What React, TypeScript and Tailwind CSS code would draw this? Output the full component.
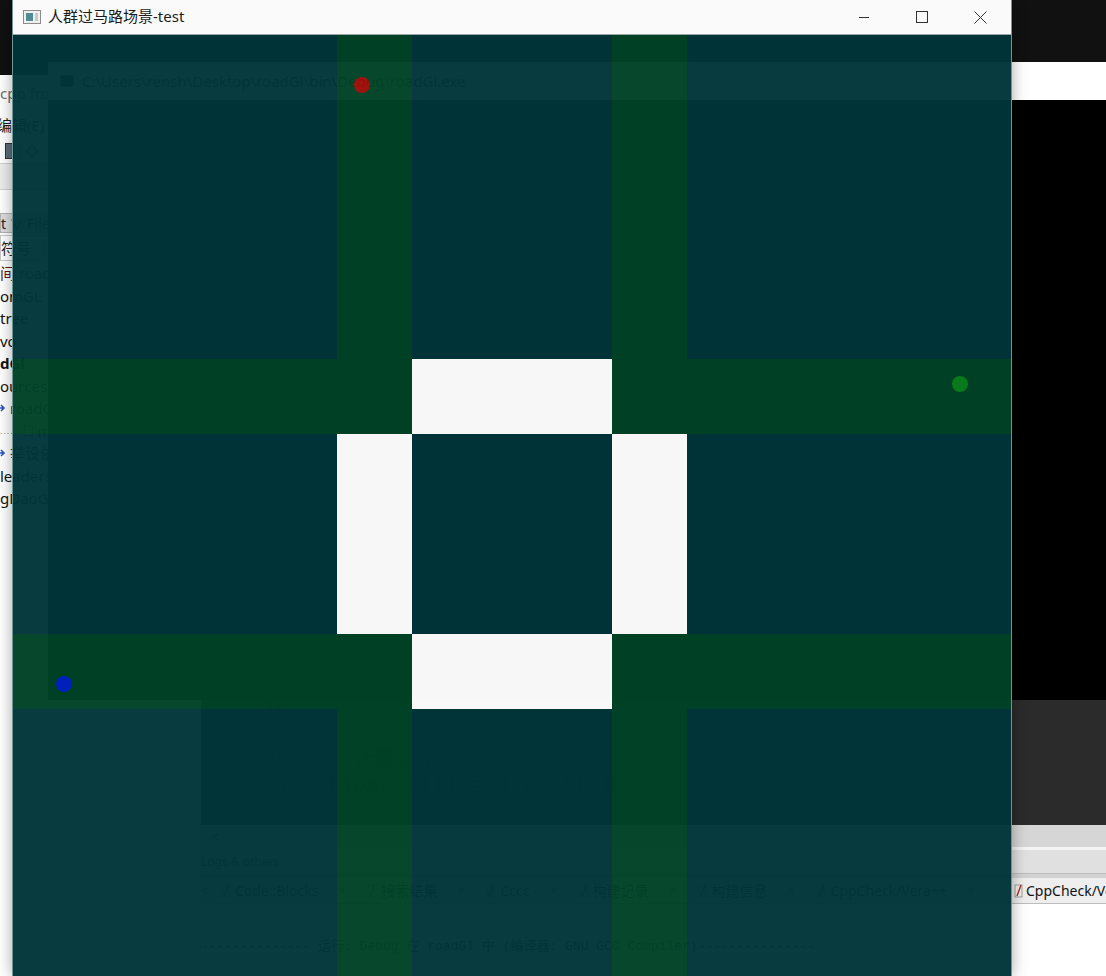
import React from 'react';

const ui = "font-['Noto_Sans','Noto_Sans_CJK_SC',sans-serif]";
const mono = "font-['Liberation_Mono','Noto_Sans_CJK_SC',monospace]";

type Cell = 't' | 'g' | 'w';

const layout: Cell[][] = [
  ['t', 'g', 't', 'g', 't'],
  ['g', 'g', 'w', 'g', 'g'],
  ['t', 'w', 't', 'w', 't'],
  ['g', 'g', 'w', 'g', 'g'],
  ['t', 'g', 't', 'g', 't'],
];

const cellColor: Record<Cell, string> = {
  t: 'bg-[#00353a]',
  g: 'bg-[#004327]',
  w: 'bg-[#ffffff]',
};

const treeRows: { text: string; bold?: boolean; arrow?: boolean; dots?: boolean; color?: string }[] = [
  { text: '间 roadGl', color: 'text-[#5a1a10]' },
  { text: 'omGL' },
  { text: 'tree' },
  { text: 'vo' },
  { text: 'dGl', bold: true },
  { text: 'ources' },
  { text: 'roadGl', arrow: true },
  { text: 'main.cpp', dots: true },
  { text: '举设依赖', arrow: true },
  { text: 'leaders' },
  { text: 'gDaoGL' },
];

const logTabs = ['Code::Blocks', '搜索结果', 'Cccc', '构建记录', '构建信息', 'CppCheck/Vera++'];

function TabIcon() {
  return (
    <svg width="10" height="16" viewBox="0 0 10 16" className="shrink-0">
      <rect x="1" y="2" width="7" height="12" fill="#f4f1e6" stroke="#8a8a8a" strokeWidth="0.8" />
      <path d="M7 2 L3 13" stroke="#b0302a" strokeWidth="1.4" />
    </svg>
  );
}

function CodeBlocks() {
  return (
    <div className={`absolute left-0 top-[75px] w-[1106px] h-[901px] flex flex-col bg-white text-[15px] ${ui}`}>
      <div className="h-[36px] flex items-center text-[#6b6b6b] whitespace-nowrap">cpp from roadGl - Code::Blocks 20.03</div>
      <div className="h-[28px] flex items-center gap-4 text-[#1a1a1a] whitespace-nowrap -ml-[3px]">
        <span>编辑(E)</span>
        <span>视图(V)</span>
        <span>搜索(S)</span>
        <span>工程(P)</span>
        <span>构建(B)</span>
        <span>调试(D)</span>
      </div>
      <div className="h-[24px] flex items-center gap-[6px] pl-[5px]">
        <div className="w-[9px] h-[16px] bg-[#5c6f7a] border border-[#333]" />
        <div className="w-px h-[18px] bg-[#bbb]" />
        <div className="w-[10px] h-[10px] rotate-45 border-2 border-[#7a8aa0]" />
      </div>
      <div className="h-[27px] bg-[#ececec] border-y border-[#d0d0d0]" />
      <div className="flex-1 flex min-h-0">
        <div className="w-[200px] flex flex-col bg-white">
          <div className="h-[22px]" />
          <div className="h-[22px] flex items-center">
            <div className="h-[20px] w-[60px] bg-[#dcdcdc] border border-[#b5b5b5] flex items-center text-[14px] text-[#222] whitespace-nowrap">
              t ∨ Files
            </div>
          </div>
          <div className="h-[28px] flex items-center">
            <div className="h-[26px] border border-[#c8c8c8] flex items-center text-[#222] whitespace-nowrap pr-3">符号</div>
          </div>
          <div className="flex flex-col leading-[22.5px] text-[#111] whitespace-nowrap">
            {treeRows.map((r, i) => (
              <div key={i} className={`h-[22.5px] flex items-center gap-[4px] ${r.bold ? 'font-bold' : ''} ${r.color ?? ''}`}>
                {r.arrow && (
                  <svg width="8" height="10" viewBox="0 0 8 10" className="shrink-0 -ml-[2px]">
                    <path d="M0 5 H5 M3 2 L6 5 L3 8" stroke="#2a55c8" strokeWidth="1.6" fill="none" />
                  </svg>
                )}
                {r.dots && <span className="text-[#888] tracking-[1px] text-[9px]">......</span>}
                {r.dots && <span className="w-[9px] h-[11px] border border-[#888] shrink-0" />}
                <span>{r.text}</span>
              </div>
            ))}
          </div>
        </div>
        <div className="flex-1 flex flex-col min-w-0 border-l border-[#d8d8d8]">
          <div className="flex-1 bg-[#2b2b2b] flex flex-col justify-end border-t border-[#3a4a4a] overflow-hidden">
            {[
              ['18', '//'],
              ['19', ''],
              ['20', '//计算比例'],
              ['21', 'float bili = 1.0/100.0;'],
              ['22', ''],
            ].map(([n, c]) => (
              <div key={n} className={`h-[26px] flex items-center text-[22px] text-[#0a0a0a] ${mono}`}>
                <span className="w-[88px] text-right">{n}</span>
                <span className={`ml-[37px] ${n === '21' ? 'font-bold' : ''}`}>{c}</span>
              </div>
            ))}
          </div>
          <div className="h-[22px] bg-[#d6d6d6] flex items-center pl-[10px] text-[#555] text-[14px]">&lt;</div>
          <div className="h-[129px] flex flex-col">
            <div className="h-[26px] bg-[#e0e0e0] border-t-[3px] border-[#f4f4f4] flex items-center text-[12px] text-[#333]">Logs &amp; others</div>
            <div className="h-[5px] bg-[#d2d2d2] border-t border-[#bcbcbc]" />
            <div className="h-[26px] bg-[#eeeeee] border-b border-[#bdbdbd] flex items-center text-[14px] text-[#111] whitespace-nowrap">
              <div className="w-[812px] shrink-0 flex items-center gap-3 overflow-hidden">
                <span className="text-[#666]">&lt;</span>
                {logTabs.map((t) => (
                  <div key={t} className="flex items-center gap-1 pr-2 border-r border-[#c8c8c8]">
                    <TabIcon />
                    <span>{t}</span>
                    <span className="ml-4 text-[#777]">×</span>
                  </div>
                ))}
              </div>
              <div className="flex items-center gap-[2px] h-full pl-[1px]">
                <TabIcon />
                <span>CppCheck/Vera++</span>
              </div>
            </div>
            <div className={`flex-1 bg-white pt-[33px] text-[13px] text-[#222] whitespace-nowrap ${mono}`}>
              -------------- 运行: Debug 在 roadGl 中 (编译器: GNU GCC Compiler)---------------
            </div>
          </div>
        </div>
      </div>
    </div>
  );
}

function Console() {
  return (
    <div className={`absolute left-[48px] top-[62px] w-[1080px] h-[638px] flex flex-col ${ui}`}>
      <div className="h-[38px] bg-white flex items-center gap-2 pl-[12px] text-[15px] text-[#333] whitespace-nowrap">
        <div className="w-[14px] h-[12px] bg-[#222] border border-[#888]" />
        <span>C:\Users\rensh\Desktop\roadGl\bin\Debug\roadGl.exe</span>
      </div>
      <div className="flex-1 bg-black" />
    </div>
  );
}

function GlWindow() {
  return (
    <div className="absolute left-[12px] top-0 w-[1000px] h-[976px] flex flex-col border-x border-[#6a9794] shadow-[0_0_14px_rgba(0,0,0,0.35)]">
      <div className={`h-[35px] shrink-0 bg-[#fafafa] border-b border-[#9aa6a6] flex items-center ${ui}`}>
        <svg width="18" height="16" viewBox="0 0 18 16" className="ml-[10px]">
          <rect x="0.5" y="1.5" width="17" height="13" fill="#f0f0f0" stroke="#8c8c8c" />
          <rect x="3" y="4" width="7" height="8" fill="#4d8c92" />
          <rect x="12" y="4" width="3" height="8" fill="#c8c8c8" />
        </svg>
        <span className="ml-[7px] -mt-[2px] text-[15px] text-[#1c1c1c] whitespace-nowrap">人群过马路场景-test</span>
        <div className="ml-auto flex h-full">
          <div className="w-[58px] flex items-center justify-center">
            <svg width="12" height="12" viewBox="0 0 12 12"><path d="M1 6.5 H11" stroke="#333" strokeWidth="1" /></svg>
          </div>
          <div className="w-[58px] flex items-center justify-center">
            <svg width="12" height="12" viewBox="0 0 12 12"><rect x="0.5" y="0.5" width="11" height="11" fill="none" stroke="#333" strokeWidth="1" /></svg>
          </div>
          <div className="w-[58px] mr-[2px] flex items-center justify-center">
            <svg width="13" height="13" viewBox="0 0 13 13"><path d="M0.5 0.5 L12.5 12.5 M12.5 0.5 L0.5 12.5" stroke="#333" strokeWidth="1" /></svg>
          </div>
        </div>
      </div>
      <div className="relative flex-1 overflow-hidden opacity-[0.97]">
        <div className="grid grid-cols-[324px_75px_200px_75px_326px] grid-rows-[324px_75px_200px_75px_326px] w-[1000px] h-[1000px]">
          {layout.flatMap((row, r) =>
            row.map((c, ci) => <div key={`${r}-${ci}`} className={cellColor[c]} />)
          )}
        </div>
        <div className="absolute left-[341px] top-[42px] w-[16px] h-[16px] rounded-full bg-[#9c0d06]" />
        <div className="absolute left-[939px] top-[341px] w-[16px] h-[16px] rounded-full bg-[#0b7d1c]" />
        <div className="absolute left-[43px] top-[641px] w-[16px] h-[16px] rounded-full bg-[#0022c2]" />
      </div>
    </div>
  );
}

export default function App() {
  return (
    <div className="relative w-[1106px] h-[976px] overflow-hidden bg-white">
      <div className="absolute left-0 top-0 w-[1106px] h-[75px] bg-[#121112]" />
      <CodeBlocks />
      <Console />
      <GlWindow />
    </div>
  );
}
